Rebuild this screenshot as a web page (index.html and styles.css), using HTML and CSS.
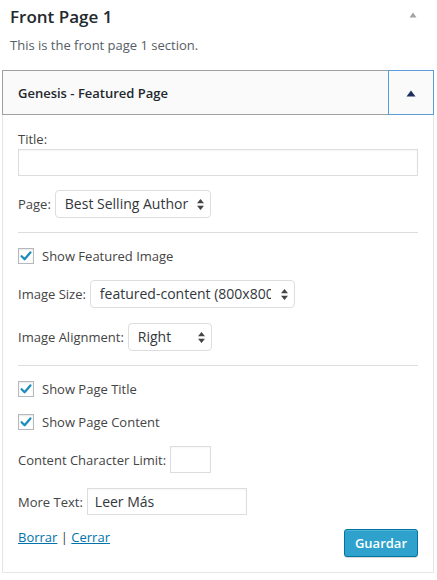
FILE: index.html
```html
<!DOCTYPE html>
<html>
<head>
<meta charset="utf-8">
<link rel="stylesheet" href="styles.css">
</head>
<body>
<div class="section-head">
  <h3 class="section-title">Front Page 1</h3>
  <svg class="section-arrow" width="8" height="6" viewBox="0 0 8 6"><path d="M4 0.5 L7.5 5.5 L0.5 5.5 Z" fill="#a0a5aa"/></svg>
</div>
<p class="section-desc">This is the front page 1 section.</p>

<div class="widget">
  <div class="widget-top">
    <div class="widget-title">Genesis - Featured Page</div>
    <div class="widget-toggle">
      <svg width="10" height="7" viewBox="0 0 10 7"><path d="M5 0.5 L9.5 6.5 L0.5 6.5 Z" fill="#1f2f5c"/></svg>
    </div>
  </div>
  <div class="widget-inside">
    <div class="label r-title">Title:</div>
    <div class="input r-title-input"></div>

    <div class="row r-page">
      <span class="label">Page:</span>
      <div class="select w-page"><span class="select-text">Best Selling Author</span><svg class="arrows" width="7" height="11" viewBox="0 0 7 11"><path d="M3.5 0 L7 4.2 L0 4.2 Z M0 6.8 L7 6.8 L3.5 11 Z" fill="#444"/></svg></div>
    </div>

    <div class="divider r-hr1"></div>

    <div class="row check-row r-cb1">
      <span class="checkbox"><svg width="16" height="16" viewBox="0 0 16 16"><path d="M3.6 8.2 L6.6 11.2 L12.4 4.4" fill="none" stroke="#1e8cbe" stroke-width="2.3" stroke-linecap="round" stroke-linejoin="round"/></svg></span>
      <span class="label">Show Featured Image</span>
    </div>

    <div class="row r-size">
      <span class="label">Image Size:</span>
      <div class="select w-size"><span class="select-text">featured-content (800x800 - featured-content)</span><svg class="arrows" width="7" height="11" viewBox="0 0 7 11"><path d="M3.5 0 L7 4.2 L0 4.2 Z M0 6.8 L7 6.8 L3.5 11 Z" fill="#444"/></svg></div>
    </div>

    <div class="row r-align">
      <span class="label">Image Alignment:</span>
      <div class="select w-align"><span class="select-text">Right</span><svg class="arrows" width="7" height="11" viewBox="0 0 7 11"><path d="M3.5 0 L7 4.2 L0 4.2 Z M0 6.8 L7 6.8 L3.5 11 Z" fill="#444"/></svg></div>
    </div>

    <div class="divider r-hr2"></div>

    <div class="row check-row r-cb2">
      <span class="checkbox"><svg width="16" height="16" viewBox="0 0 16 16"><path d="M3.6 8.2 L6.6 11.2 L12.4 4.4" fill="none" stroke="#1e8cbe" stroke-width="2.3" stroke-linecap="round" stroke-linejoin="round"/></svg></span>
      <span class="label">Show Page Title</span>
    </div>

    <div class="row check-row r-cb3">
      <span class="checkbox"><svg width="16" height="16" viewBox="0 0 16 16"><path d="M3.6 8.2 L6.6 11.2 L12.4 4.4" fill="none" stroke="#1e8cbe" stroke-width="2.3" stroke-linecap="round" stroke-linejoin="round"/></svg></span>
      <span class="label">Show Page Content</span>
    </div>

    <div class="row r-limit">
      <span class="label">Content Character Limit:</span>
      <div class="input w-limit"></div>
    </div>

    <div class="row r-more">
      <span class="label">More Text:</span>
      <div class="input w-more"><span class="input-text">Leer Más</span></div>
    </div>

    <div class="footer">
      <div class="links"><a class="link">Borrar</a> | <a class="link">Cerrar</a></div>
      <div class="button">Guardar</div>
    </div>
  </div>
</div>
</body>
</html>
```

FILE: styles.css
```css
html, body {
  margin: 0;
  padding: 0;
  background: #ffffff;
}
body {
  font-family: "Open Sans", "Noto Sans", sans-serif;
  font-size: 13px;
  line-height: 18px;
  color: #444444;
  width: 437px;
}
.section-head {
  display: flex;
  justify-content: space-between;
  align-items: flex-start;
  padding: 5px 20px 0 10px;
  height: 23px;
}
.section-title {
  margin: 0;
  font-size: 17px;
  font-weight: 600;
  line-height: 24px;
  color: #23282d;
}
.section-arrow {
  margin-top: 7px;
}
.section-desc {
  margin: 8px 0 0 10px;
  color: #555d66;
  font-size: 13px;
  line-height: 18px;
}
.widget {
  margin: 16px 3px 0 2px;
}
.widget-top {
  display: flex;
  justify-content: space-between;
  align-items: stretch;
  height: 43px;
  background: #fafafa;
  border: 1px solid #a0a0a0;
  border-right: none;
}
.widget-title {
  display: flex;
  align-items: center;
  padding-left: 15px;
  font-weight: 600;
  font-size: 13px;
  color: #23282d;
}
.widget-toggle {
  width: 44px;
  margin: -1px 0;
  border: 1px solid #5b9dd9;
  display: flex;
  align-items: center;
  justify-content: center;
  background: #fafafa;
}
.widget-toggle svg {
  margin-top: 2px;
}
.widget-inside {
  border: 1px solid #e5e5e5;
  border-top: none;
  padding: 0 15px 15px 15px;
  display: flex;
  flex-direction: column;
  background: #fff;
}
.label {
  color: #444;
  white-space: nowrap;
}
.row {
  display: flex;
  align-items: center;
  gap: 4px;
}
.r-title { margin-top: 15px; }
.r-title-input { margin-top: 1px; }
.r-page { margin-top: 14px; height: 28px; }
.r-hr1 { margin-top: 14px; }
.r-cb1 { margin-top: 15px; }
.r-size { margin-top: 16px; height: 28px; }
.r-align { margin-top: 15px; height: 28px; }
.r-hr2 { margin-top: 14px; }
.r-cb2 { margin-top: 15px; }
.r-cb3 { margin-top: 17px; }
.r-limit { margin-top: 16px; height: 27px; }
.r-more { margin-top: 15px; height: 27px; }

.input {
  box-sizing: border-box;
  height: 27px;
  border: 1px solid #dddddd;
  background: #fff;
  box-shadow: inset 0 1px 2px rgba(0,0,0,0.04);
  display: flex;
  align-items: center;
}
.w-limit { width: 41px; }
.w-more { width: 160px; }
.input-text {
  padding-left: 7px;
  font-size: 14px;
  color: #32373c;
}
.divider {
  height: 1px;
  background: #dddddd;
}
.check-row {
  height: 16px;
  gap: 8px;
}
.checkbox {
  box-sizing: border-box;
  width: 16px;
  height: 16px;
  border: 1px solid #b4b9be;
  background: #fff;
  box-shadow: inset 0 1px 2px rgba(0,0,0,0.1);
  display: flex;
  align-items: center;
  justify-content: center;
  flex: none;
}
.checkbox svg {
  flex: none;
}
.select {
  box-sizing: border-box;
  height: 28px;
  border: 1px solid #dddddd;
  border-radius: 4px;
  background: #fff;
  display: flex;
  align-items: center;
  padding: 0 6px 0 9px;
  gap: 4px;
  overflow: hidden;
}
.select-text {
  flex: 1;
  min-width: 0;
  overflow: hidden;
  white-space: nowrap;
  font-size: 14px;
  color: #32373c;
}
.arrows {
  flex: none;
}
.w-page { width: 156px; }
.w-size { width: 205px; gap: 10px; }
.w-align { width: 84px; }

.footer {
  margin-top: 13px;
  display: flex;
  justify-content: space-between;
  align-items: flex-start;
}
.links {
  color: #444;
}
.link {
  color: #0073aa;
  text-decoration: underline;
}
.button {
  box-sizing: border-box;
  margin-top: 1px;
  height: 28px;
  padding: 0 10px;
  display: flex;
  align-items: center;
  background: #2ea2cc;
  border: 1px solid #0074a2;
  border-radius: 3px;
  color: #fff;
  font-weight: 600;
  font-size: 13px;
  box-shadow: inset 0 1px 0 rgba(120,200,230,0.5), 0 1px 0 rgba(0,0,0,0.15);
}
```
